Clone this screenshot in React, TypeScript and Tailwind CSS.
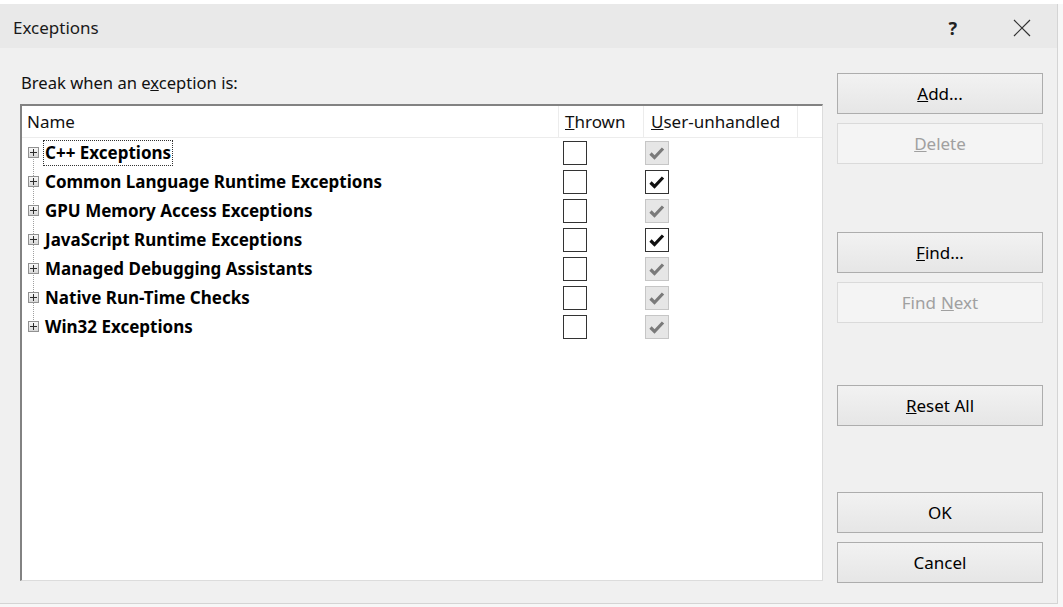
import React from 'react';

const font = { fontFamily: '"Noto Sans", "Open Sans", sans-serif' };

const rows = [
  { name: 'C++ Exceptions', user: 'disabled', focus: true },
  { name: 'Common Language Runtime Exceptions', user: 'checked' },
  { name: 'GPU Memory Access Exceptions', user: 'disabled' },
  { name: 'JavaScript Runtime Exceptions', user: 'checked' },
  { name: 'Managed Debugging Assistants', user: 'disabled' },
  { name: 'Native Run-Time Checks', user: 'disabled' },
  { name: 'Win32 Exceptions', user: 'disabled' },
];

function Check({ color }: { color: string }) {
  return (
    <svg width="16" height="14" viewBox="0 0 16 14">
      <path d="M1.5 7.5 L5.5 11.5 L14 2.5" fill="none" stroke={color} strokeWidth="3.2" strokeLinejoin="miter" />
    </svg>
  );
}

function Box({ state }: { state: 'empty' | 'checked' | 'disabled' }) {
  if (state === 'disabled') {
    return (
      <div className="flex h-[24px] w-[24px] items-center justify-center border border-[#c6c6c6] bg-[#e6e6e6]">
        <Check color="#7a7a7a" />
      </div>
    );
  }
  return (
    <div className="flex h-[24px] w-[24px] items-center justify-center border border-[#333] bg-white">
      {state === 'checked' && <Check color="#111" />}
    </div>
  );
}

function Expander() {
  return (
    <div className="relative flex h-[11px] w-[11px] items-center justify-center border border-[#919191] bg-gradient-to-b from-[#f8f8f8] to-[#d8d8d8]">
      <div className="absolute h-[1px] w-[7px] bg-[#2d2d2d]" />
      <div className="absolute h-[7px] w-[1px] bg-[#2d2d2d]" />
    </div>
  );
}

function Btn({ children, disabled }: { children: React.ReactNode; disabled?: boolean }) {
  return (
    <div
      className={`flex h-[41px] w-[206px] items-center justify-center border text-[17px] ${
        disabled
          ? 'border-[#dadada] bg-[#f4f4f4] text-[#a0a0a0]'
          : 'border-[#adadad] bg-gradient-to-b from-[#f2f2f2] to-[#e6e6e6] text-black'
      }`}
    >
      {children}
    </div>
  );
}

export default function App() {
  return (
    <div className="h-[607px] w-[1063px] overflow-hidden bg-[#f7f7f7]" style={font}>
      <div className="h-[4px] bg-white" />
      <div className="flex h-[600px] w-[1058px] flex-col border-r border-b border-[#d4d4d4] bg-[#f0f0f0]">
        <div className="flex h-[44px] shrink-0 items-center bg-[#e9e9e9] pl-[13px] pr-[26px] pt-[4px]">
          <span className="text-[17px] text-[#1a1a1a]">Exceptions</span>
          <span className="ml-auto mr-[56px] text-[18px] font-bold text-[#222]">?</span>
          <svg width="18" height="18" viewBox="0 0 18 18">
            <path d="M1 1 L17 17 M17 1 L1 17" stroke="#333" strokeWidth="1.2" />
          </svg>
        </div>
        <div className="flex flex-1 pl-[20px]">
          <div className="flex w-[803px] flex-col">
            <div className="mt-[23px] h-[28px] pl-[1px] text-[16.6px] text-[#111]">
              Break when an e<span className="underline">x</span>ception is:
            </div>
            <div className="mt-[5px] h-[477px] border-t-2 border-l-2 border-b border-r border-t-[#828282] border-l-[#828282] border-b-[#dcdcdc] border-r-[#dcdcdc] bg-white">
              <div className="flex h-[32px] border-b border-[#ececec] text-[17px] text-[#111]">
                <div className="flex w-[537px] items-center border-r border-[#ececec] pl-[5px]">Name</div>
                <div className="flex w-[85px] items-center border-r border-[#ececec] pl-[6px]">
                  <span className="underline decoration-1">T</span>hrown
                </div>
                <div className="flex w-[154px] items-center border-r border-[#ececec] pl-[7px]">
                  <span className="underline">U</span>ser-unhandled
                </div>
              </div>
              <div className="relative">
                <div className="absolute left-[11px] top-[14px] h-[174px] border-l border-dotted border-[#a0a0a0]" />
                {rows.map((r) => (
                  <div key={r.name} className="flex h-[29px] items-center">
                    <div className="flex w-[537px] items-center pl-[6px]">
                      <Expander />
                      <span
                        className={`ml-[5px] px-[1px] text-[17px] font-bold leading-[24px] text-black ${
                          r.focus ? 'outline outline-1 outline-dotted outline-[#333]' : ''
                        }`}
                      >
                        {r.name}
                      </span>
                    </div>
                    <div className="w-[85px] pl-[4px]">
                      <Box state="empty" />
                    </div>
                    <div className="w-[154px] pl-[1px]">
                      <Box state={r.user as 'checked' | 'disabled'} />
                    </div>
                  </div>
                ))}
              </div>
            </div>
          </div>
          <div className="ml-[14px] flex flex-col pt-[25px]">
            <Btn>
              <span className="underline">A</span>dd...
            </Btn>
            <div className="mt-[9px]">
              <Btn disabled>
                <span className="underline">D</span>elete
              </Btn>
            </div>
            <div className="mt-[68px]">
              <Btn>
                <span className="underline">F</span>ind...
              </Btn>
            </div>
            <div className="mt-[9px]">
              <Btn disabled>
                Find <span className="ml-[5px] underline">N</span>ext
              </Btn>
            </div>
            <div className="mt-[62px]">
              <Btn>
                <span className="underline">R</span>eset All
              </Btn>
            </div>
            <div className="mt-[66px]">
              <Btn>OK</Btn>
            </div>
            <div className="mt-[9px]">
              <Btn>Cancel</Btn>
            </div>
          </div>
        </div>
      </div>
    </div>
  );
}
